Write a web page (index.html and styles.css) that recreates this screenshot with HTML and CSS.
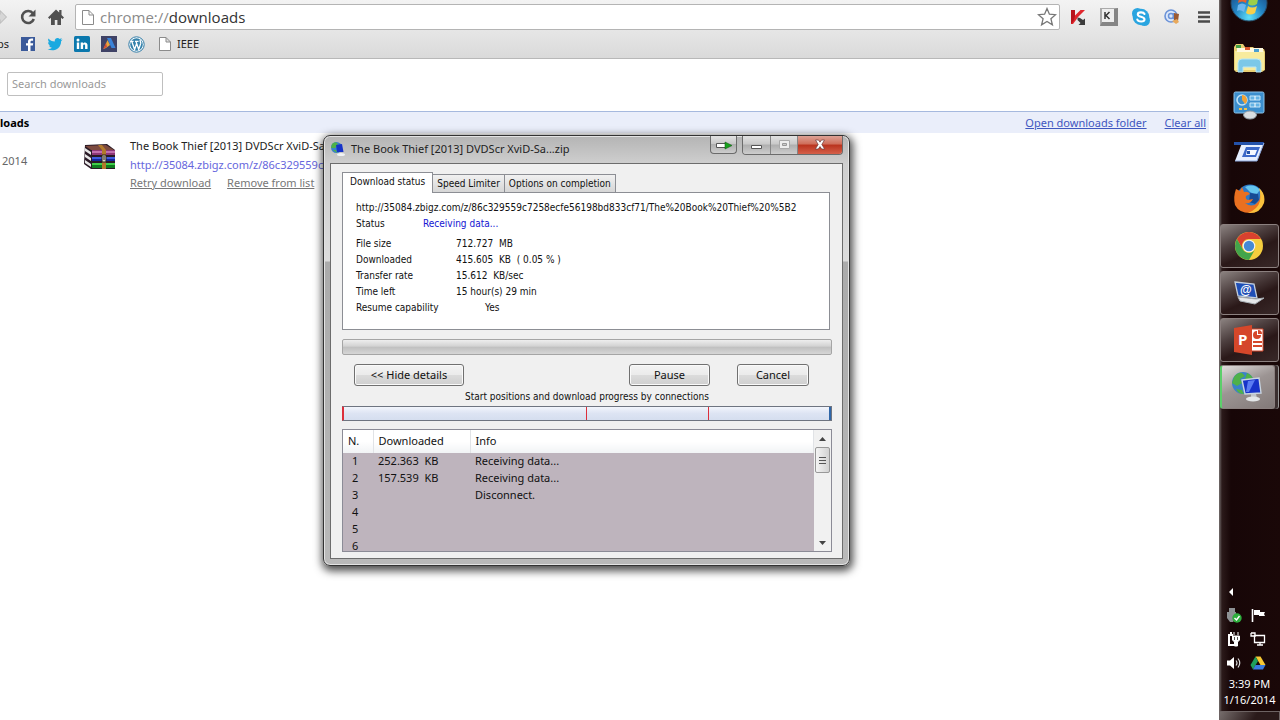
FILE: index.html
```html
<!DOCTYPE html>
<html lang="en">
<head>
<meta charset="utf-8">
<title>Downloads</title>
<link rel="stylesheet" href="styles.css">
</head>
<body>
<div class="desktop">
  <div class="browser">
    <header class="chrome">
      <div class="toolbar">
        <button class="tool forward" aria-label="Forward"><svg width="9" height="18" viewBox="0 0 9 18"><path d="M-6 6.500h6V2.500L6.500 9 0 15.500v-4h-6z" fill="#d6d6d6" stroke="#b5b5b5"/></svg></button>
        <button class="tool reload" aria-label="Reload"><svg width="18" height="18" viewBox="0 0 18 18"><path d="M14 5.500A6 6 0 1 0 14.800 11" fill="none" stroke="#505050" stroke-width="2.600"/><path d="M16.500 1.500v7h-7z" fill="#505050"/></svg></button>
        <button class="tool home" aria-label="Home"><svg width="18" height="18" viewBox="0 0 18 18"><path d="M9 1.500 1 9.500l1.500 1.500L4 9.700V17h3.800v-5h2.600v5H14V9.700l1.500 1.300L17 9.500l-2.500-2.500V2h-2.300v2.500z" fill="#505050"/></svg></button>
        <div class="omnibox">
          <svg class="page" width="12" height="15" viewBox="0 0 12 15"><path d="M.5.500h6.500l4.500 4.500v9.500H.500zM7 .5V5h4.500" fill="#fff" stroke="#8b8b8b"/></svg>
          <span class="address" role="textbox" aria-label="Address"><span class="scheme">chrome://</span>downloads</span>
          <button class="star" aria-label="Bookmark"><svg width="20" height="20" viewBox="0 0 20 20"><path d="M10 1.500l2.400 5.700 6.200.500-4.700 4 1.500 6.100L10 14.500l-5.400 3.300 1.500-6.100-4.700-4 6.200-.5z" fill="#fff" stroke="#777" stroke-width="1.300"/></svg></button>
        </div>
        <div class="extensions">
          <button class="tool" aria-label="Kaspersky advisor"><svg width="18" height="18" viewBox="0 0 18 18"><path d="M2 2h4v5.500L11.500 2H16L9 9l-2 3-3 4H2z" fill="#e0262c"/><path d="M2 2h4v6l-1 4-3 4z" fill="#b8141c"/><path d="M8.500 9.500l2.500.5 3 2 2-1.500V17h-6.500l2-2-3-3z" fill="#3c3c3c"/></svg></button>
          <button class="tool" aria-label="Virtual keyboard"><svg width="20" height="20" viewBox="0 0 20 20"><path d="M1 1h18v18H1z" fill="#aaa"/><path d="M3 2h12v13H3z" fill="#eee"/><path d="M15 2l4-1v18l-4-4zM1 19l2-4h12l4 4z" fill="#858585"/><path d="M6 5v7M10.500 5 7 8.500l3.500 3.500" fill="none" stroke="#333" stroke-width="1.500"/></svg></button>
          <button class="tool" aria-label="Skype"><svg width="20" height="20" viewBox="0 0 20 20"><circle cx="6.500" cy="6.500" r="5.500" fill="#2aa5e0"/><circle cx="13.500" cy="13.500" r="5.500" fill="#2aa5e0"/><circle cx="10" cy="10" r="8.300" fill="#2aa5e0"/><path d="M13.500 7C12.500 4.800 6.800 4.700 6.800 7.400c0 3 6.700 1.600 6.700 4.900 0 3-6.300 2.900-7.200.2" fill="none" stroke="#fff" stroke-width="2.100" stroke-linecap="round"/></svg></button>
          <button class="tool" aria-label="Mail checker"><svg width="18" height="18" viewBox="0 0 18 18"><circle cx="8" cy="8" r="6" fill="#dce8fa" stroke="#6b93d8" stroke-width="1.600"/><circle cx="8" cy="8" r="2.500" fill="none" stroke="#6b93d8" stroke-width="1.500"/><path d="M10.500 5v5.500h2.500" fill="none" stroke="#6b93d8" stroke-width="1.400"/><path d="M11 5l5 1-1 7-4-1z" fill="#9c5a32"/><path d="M9 13l5-2 2 3-3 2z" fill="#e8a95c"/></svg></button>
          <button class="tool menu" aria-label="Menu"><svg width="14" height="14" viewBox="0 0 14 14"><path d="M1 2.500h12M1 7h12M1 11.500h12" stroke="#4a4a4a" stroke-width="2.600"/></svg></button>
        </div>
      </div>
      <nav class="bookmarks">
        <a class="apps" href="#">ps</a>
        <a href="#" aria-label="Facebook"><svg width="16" height="16" viewBox="0 0 16 16"><path d="M1 1h14v14H1z" fill="#3b5a9a"/><path d="M10.500 15V9.500h2.300l.4-2.300h-2.700V6c0-.8.4-1.300 1.300-1.300h1.300V2.600C9.800 2.200 8 3.200 8 5.600v1.600H6v2.300h2V15z" fill="#fff"/></svg></a>
        <a href="#" aria-label="Twitter"><svg width="16" height="16" viewBox="0 0 16 16"><path d="M1.500 2.500C3 4.300 5 5.400 7.800 5.500 7.200 2.300 10.700.800 12.800 2.900l2-.8-1 1.800 1.800-.4-1.500 1.800C14.200 12.500 6.500 16.500.5 13c2 .1 3.400-.4 4.500-1.300-1.500-.1-2.500-.9-2.900-2.200h1.300C1.900 8.900 1 7.800 1 6.200l1.400.4C1.200 5.600.7 4.200 1.500 2.500z" fill="#1ba9e0"/></svg></a>
        <a href="#" aria-label="LinkedIn"><svg width="16" height="16" viewBox="0 0 16 16"><rect width="16" height="16" rx="1.500" fill="#0b78ad"/><circle cx="4" cy="4" r="1.500" fill="#fff"/><path d="M2.800 6.500h2.400V13H2.800zM6.700 6.500H9v1c1-1.700 4.500-1.600 4.500 1.600V13h-2.400V9.600c0-1.600-2-1.500-2 0V13H6.700z" fill="#fff"/></svg></a>
        <a href="#" aria-label="Analytics"><svg width="16" height="16" viewBox="0 0 16 16"><path d="M0 0h16v16H0z" fill="#3f4266"/><path d="M6 2h4l4.500 10h-4z" fill="#3b83d8"/><path d="M6.500 4 9 9l-4 3-2.500 1z" fill="#e8a33c"/><path d="M2 13l3-6 1 4z" fill="#cf4a3a"/></svg></a>
        <a href="#" aria-label="WordPress"><svg width="17" height="17" viewBox="0 0 17 17"><circle cx="8.500" cy="8.500" r="7.700" fill="#fff" stroke="#2f7aa5" stroke-width="1"/><circle cx="8.500" cy="8.500" r="6.300" fill="#3482ab"/><path d="M2.600 5.300h3M7 5.300h3.500M3.800 5.500l2.800 8 2.200-6.500M8 5.500l2.700 8 2-6c.4-1.500-1.200-2-.4-3.700" fill="none" stroke="#fff" stroke-width="1.300"/></svg></a>
        <a class="folder" href="#"><svg width="12" height="14" viewBox="0 0 12 14"><path d="M.5.500H7L11.500 5v8.500H.500zM7 .5V5h4.500" fill="#fff" stroke="#8b8b8b"/></svg>IEEE</a>
      </nav>
    </header>
    <main class="downloads">
      <input class="search" type="search" placeholder="Search downloads" aria-label="Search downloads">
      <div class="band">
        <h1>loads</h1>
        <a href="#">Open downloads folder</a>
        <a href="#">Clear all</a>
      </div>
      <div class="entry">
        <div class="date">2014</div>
        <svg class="archive" width="34" height="26" viewBox="0 0 34 26">
          <path d="M2 1l22-1 8 6v19H8L1 20z" fill="#2a1a26"/>
          <path d="M2 2l21-1 8 5H8z" fill="#7d4a3f"/><path d="M9 6h23v5H9z" fill="#8e3678"/><path d="M9 7h23v2H9z" fill="#c070ae"/>
          <path d="M9 13h23v4H9z" fill="#1424a0"/><path d="M9 13h23v2H9z" fill="#3f5ce0"/>
          <path d="M9 19h23v5H9z" fill="#0f7d20"/><path d="M9 19h23v2H9z" fill="#3fce49"/>
          <path d="M2 4l6 4v3L2 7zM2 10l6 4v3l-6-4zM2 16l6 4v3l-6-4z" fill="#e8e8e8"/>
          <path d="M15 1h4l4 5v19h-4V6z" fill="#b27a2c"/><path d="M19 11h4v7h-4z" fill="#dcd6c4" stroke="#28221c"/><path d="M21 12v4" stroke="#28221c"/>
        </svg>
        <div class="info">
          <div class="name">The Book Thief [2013] DVDScr XviD-Sa...zip</div>
          <a class="source" href="#">http://35084.zbigz.com/z/86c329559c7258ecfe56</a>
          <div class="actions"><a href="#">Retry download</a><a href="#">Remove from list</a></div>
        </div>
      </div>
    </main>
  </div>

  <aside class="taskbar">
    <button class="orb" aria-label="Start"><svg width="38" height="38" viewBox="0 0 38 38"><defs><radialGradient id="orb" cx=".5" cy=".9" r=".8"><stop offset="0" stop-color="#5fe0fa"/><stop offset=".5" stop-color="#2384c4"/><stop offset="1" stop-color="#1a4d87"/></radialGradient></defs><circle cx="19" cy="19" r="18" fill="url(#orb)" stroke="#274b66"/><path d="M10 10q4-3 8 0l-2 9q-4-3-8 0z" fill="#e8622c"/><path d="M20 11q4 3 9 0l-2 9q-5 3-9 0z" fill="#9cce4a"/><path d="M8 21q4-3 8 0l-2 7q-4-3-7-1z" fill="#6fb7ee"/><path d="M18 22q4 3 9 0l-2 7q-5 3-9 0z" fill="#f8cf4b"/></svg></button>
    <div class="tasks">
      <button class="task" aria-label="Explorer"><svg width="34" height="32" viewBox="0 0 34 32"><path d="M2 5 4 2h7l2 3h8l2 2h9l1 3v18l-3 2H4l-2-2z" fill="#e9cf73"/><path d="M3 9h29v19H3z" fill="#f8eb9d"/><path d="M5 6h26v4H5z" fill="#fff9df"/><path d="M4 3h5v3H4z" fill="#43a047"/><path d="M13 5h5v3h-5z" fill="#d8582e"/><path d="M22 7h5v3h-5z" fill="#4a9fd1"/><path d="M6 30v-9q0-4 4-4h15q4 0 4 4v9h-5v-5H11v5z" fill="#7cc8e8" stroke="#b8e6f6"/></svg></button>
      <button class="task" aria-label="Control panel"><svg width="34" height="30" viewBox="0 0 34 30"><rect x="2" y="2" width="30" height="21" rx="1.500" fill="#3c8fce" stroke="#8ec4ea"/><circle cx="10" cy="10" r="5" fill="none" stroke="#bfe2f8" stroke-width="1.600"/><path d="M10 10V5A5 5 0 0 1 13 14z" fill="#f0a236"/><path d="M18 6h10v4H18zM18 13h10v4H18z" fill="#64b2e4" stroke="#c6e5f7"/><path d="M23 6v4M23 13v4" stroke="#fff"/><path d="M7 19h3M12 19h3" stroke="#f5c34a" stroke-width="2"/><ellipse cx="18" cy="25" rx="6.500" ry="4" fill="#d9dee2" stroke="#909ba5"/></svg></button>
      <button class="task" aria-label="Run"><svg width="34" height="24" viewBox="0 0 34 24"><path d="M10 3h22l-7 18H3z" fill="#e7efff"/><path d="M2 2h30l-1 3H2z" fill="#2452aa"/><path d="M14 7h14l-4 10H10z" fill="#3c68c8"/><path d="M15 10h10l-2 5h-9z" fill="#f6f9ff"/><path d="M15 11h3v3h-3z" fill="#2452aa"/><path d="M3 21h22l7-18" fill="none" stroke="#8daae0"/></svg></button>
      <button class="task" aria-label="Firefox"><svg width="32" height="32" viewBox="0 0 32 32"><circle cx="17" cy="15" r="13.500" fill="#2e79c6"/><path d="M12 4q9-4 15 3l-4 5-6-3z" fill="#65c5ee"/><path d="M17 10l8 1 1 6-4 4-6-2z" fill="#164a94"/><path d="M3 6l4 2 2-4 2 5q4-1 6 2l-4 2q-1 3 2 4l5-1q-2 5-8 4 7 5 12 0 4-4 3-9 4 5 2 10-3 9-12 9Q6 30 2 22 0 14 3 6z" fill="#ea7020"/><path d="M26 5q7 6 5 15-4 11-16 10 10-4 12-12 1-7-1-13z" fill="#f9c13d"/></svg></button>
      <button class="task open" aria-label="Chrome"><svg width="30" height="30" viewBox="0 0 30 30"><circle cx="15" cy="15" r="14" fill="#f5cd3e"/><path d="M2.900 8A14 14 0 0 1 27.100 8H15a7 7 0 0 0-6.100 10.500z" fill="#d9412f"/><path d="M2.900 8A14 14 0 0 0 15 29l6-10.500a7 7 0 0 1-12.100 0z" fill="#43a44b"/><circle cx="15" cy="15" r="6.300" fill="#f4f4f4"/><circle cx="15" cy="15" r="5.200" fill="#4689d4"/></svg></button>
      <button class="task open" aria-label="Internet connection"><svg width="34" height="28" viewBox="0 0 34 28"><path d="M3 3l19 2 3 14-19-2z" fill="#1f4fb6" stroke="#c5cfdc" stroke-width="1.300"/><text x="8" y="15" class="at">@</text><path d="M6 18l18 2 8-1-9 6-15-3z" fill="#e6e8ea" stroke="#a8afb5"/></svg></button>
      <button class="task open" aria-label="PowerPoint"><svg width="32" height="32" viewBox="0 0 32 32"><path d="M16 5h14v22H16z" fill="#fff" stroke="#d5472a"/><path d="M20 18h9M20 22h9" stroke="#d5472a" stroke-width="2"/><path d="M24 7a4 4 0 1 0 4 4h-4z" fill="#d5472a"/><path d="M25 6v4h4a4 4 0 0 0-4-4z" fill="#d5472a"/><path d="M1 4l18-3v30L1 28z" fill="#d5472a"/><text x="5" y="21" class="ppt">P</text></svg></button>
      <button class="task open active" aria-label="Download manager"><svg width="34" height="32" viewBox="0 0 34 32"><circle cx="13" cy="12" r="11" fill="#3a82c8"/><path d="M4 6q4-5 8-4l3 3-5 3 2 4-5 3-5-3zM17 2q5 2 6 6l-5 3-3-3zM6 18l6 1 2 4q-6 0-8-5z" fill="#4fb148"/><path d="M12 9l17-2 2 15-16 1z" fill="#1733c9" stroke="#c9d5e0" stroke-width="1.400"/><path d="M18 10l7-1-6 12h-3z" fill="#5b7cf2"/><path d="M21 23h5l1 4h-6z" fill="#c2c7cc"/><ellipse cx="23" cy="28" rx="7" ry="2.500" fill="#e3e6e8"/></svg></button>
    </div>
    <div class="tray">
      <button class="expand" aria-label="Show hidden icons"><svg width="6" height="8" viewBox="0 0 6 8"><path d="M5 0v8L1 4z" fill="#fff"/></svg></button>
      <div class="status">
        <svg width="16" height="16" viewBox="0 0 16 16"><path d="M3 1h6v4H3zM1 5h9v6l-3 4H4l-3-4z" fill="#8d9194"/><circle cx="11" cy="11" r="4.700" fill="#2eae3d"/><path d="M8.500 11l2 2 3-4" fill="none" stroke="#fff" stroke-width="1.400"/></svg>
        <svg width="16" height="16" viewBox="0 0 16 16"><path d="M2.500 2v13" stroke="#fff" stroke-width="1.600"/><path d="M4 3h6v2h5l-1 2 1 2H9V8H4z" fill="#fff"/></svg>
        <svg width="16" height="16" viewBox="0 0 16 16"><path d="M2 3h5v2H4v8h5v2H2zM4 1h2v2H4z" fill="#fff"/><path d="M8 1v3M12 1v3M6.500 5h7v4l-2 2v4h-3v-4l-2-2z" fill="#fff" stroke="#fff"/><path d="M8.500 6v3M11.500 6v3" stroke="#555"/></svg>
        <svg width="16" height="16" viewBox="0 0 16 16"><path d="M4.500 4.500h10v7h-10zM7 14h6M10 11v3M1 2h4v4M1 2v3h3" fill="none" stroke="#fff" stroke-width="1.300"/></svg>
        <svg width="16" height="16" viewBox="0 0 16 16"><path d="M1 5.500h3L8 2v12l-4-3.500H1z" fill="#fff"/><path d="M10 5.500q2 2.500 0 5M12 3.500q3.500 4.500 0 9" fill="none" stroke="#ddd" stroke-width="1.200"/></svg>
        <svg width="16" height="16" viewBox="0 0 16 16"><path d="M5.500 1.500h5l5 8.500h-5z" fill="#f7c934"/><path d="M5.500 1.500 8 6 3 14.500.500 10z" fill="#1f9f5b"/><path d="M3 14.500 5.500 10h10L13 14.500z" fill="#3a7be0"/></svg>
      </div>
      <time class="clock">3:39 PM<br>1/16/2014</time>
      <button class="peek" aria-label="Show desktop"></button>
    </div>
  </aside>

  <section class="window" role="dialog" aria-labelledby="window-title">
    <header class="titlebar">
      <svg width="16" height="16" viewBox="0 0 16 16"><circle cx="6.500" cy="6.500" r="5.500" fill="#3a82c8"/><path d="M2 3q3-3 5-1l1 2-3 3-4 0zM3 9l3 0 1 3z" fill="#4fb148"/><path d="M6 4l6-1 1.500 8H7z" fill="#1733c9"/><ellipse cx="11" cy="13.500" rx="4" ry="1.600" fill="#f0f2f4"/></svg>
      <h2 id="window-title">The Book Thief [2013] DVDScr XviD-Sa...zip</h2>
      <div class="caption">
        <button class="cap tray-cap" aria-label="Minimize to tray"><svg width="18" height="12" viewBox="0 0 18 12"><path d="M1.500 4.500h9v4h-9z" fill="#fff" stroke="#555"/><path d="M10 3l7 3.500-7 3.500z" fill="#17a31d" stroke="#155d18" stroke-width=".6"/></svg></button>
        <div class="cap-group">
          <button class="cap" aria-label="Minimize"><svg width="13" height="12" viewBox="0 0 13 12"><path d="M1.500 6.500h10v3h-10z" fill="#fff" stroke="#555"/></svg></button>
          <button class="cap" aria-label="Maximize" disabled><svg width="13" height="12" viewBox="0 0 13 12"><path d="M1.500 1.500h10v8h-10z" fill="#eee" stroke="#aaa"/><path d="M4.500 4.500h4v2h-4z" fill="#ccc" stroke="#999"/></svg></button>
          <button class="cap close" aria-label="Close"><svg width="12" height="12" viewBox="0 0 12 12"><path d="M1.500 1h3L6 3.200 7.500 1h3L7.800 5.500l2.900 4.500h-3L6 7.600 4.300 10h-3l2.900-4.500z" fill="#fff" stroke="#6b3a3a" stroke-width=".7"/></svg></button>
        </div>
      </div>
    </header>
    <div class="client">
      <div class="tabs" role="tablist">
        <button class="tab selected" role="tab" aria-selected="true">Download status</button>
        <button class="tab" role="tab" aria-selected="false">Speed Limiter</button>
        <button class="tab" role="tab" aria-selected="false">Options on completion</button>
      </div>
      <div class="panel" role="tabpanel">
        <div class="url">http://35084.zbigz.com/z/86c329559c7258ecfe56198bd833cf71/The%20Book%20Thief%20%5B2</div>
        <dl class="state"><dt>Status</dt><dd>Receiving data...</dd></dl>
        <dl class="facts">
          <dt>File size</dt><dd>712.727&nbsp; MB</dd>
          <dt>Downloaded</dt><dd>415.605&nbsp; KB&nbsp; ( 0.05 % )</dd>
          <dt>Transfer rate</dt><dd>15.612&nbsp; KB/sec</dd>
          <dt>Time left</dt><dd>15 hour(s) 29 min</dd>
          <dt>Resume capability</dt><dd class="resume">Yes</dd>
        </dl>
      </div>
      <div class="progress" role="progressbar" aria-label="Download progress" aria-valuenow="0"></div>
      <div class="buttons">
        <button class="push details">&lt;&lt; Hide details</button>
        <button class="push pause">Pause</button>
        <button class="push cancel">Cancel</button>
      </div>
      <div class="caption-text">Start positions and download progress by connections</div>
      <div class="segments"><i></i><i></i><i></i><i></i></div>
      <div class="list">
        <table class="connections">
          <thead><tr><th class="col-n">N.</th><th class="col-size">Downloaded</th><th>Info</th></tr></thead>
          <tbody>
            <tr><td>1</td><td>252.363&nbsp; KB</td><td>Receiving data...</td></tr>
            <tr><td>2</td><td>157.539&nbsp; KB</td><td>Receiving data...</td></tr>
            <tr><td>3</td><td></td><td>Disconnect.</td></tr>
            <tr><td>4</td><td></td><td></td></tr>
            <tr><td>5</td><td></td><td></td></tr>
            <tr><td>6</td><td></td><td></td></tr>
          </tbody>
        </table>
        <div class="scroll">
          <button aria-label="Scroll up"><svg width="7" height="4" viewBox="0 0 7 4"><path d="M0 4 3.500 0 7 4z" fill="#444"/></svg></button>
          <div class="thumb"><svg width="7" height="9" viewBox="0 0 7 9"><path d="M0 1.500h7M0 4.500h7M0 7.500h7" stroke="#555"/></svg></div>
          <button class="down" aria-label="Scroll down"><svg width="7" height="4" viewBox="0 0 7 4"><path d="M0 0 3.500 4 7 0z" fill="#444"/></svg></button>
        </div>
      </div>
    </div>
  </section>
</div>
</body>
</html>
```

FILE: styles.css
```css
* { box-sizing: border-box; }
body { margin: 0; font: 11px/16px "Noto Sans", sans-serif; color: #222; background: #fff; }
button { padding: 0; border: 0; background: none; font: inherit; color: inherit; }
svg { display: block; flex: none; }
h1, h2, dl, dd { margin: 0; }

.desktop { position: relative; display: flex; min-height: 100vh; overflow: hidden; }
.browser { flex: 1; min-width: 0; }

/* Browser toolbar */
.chrome { height: 59px; padding-top: 4px; background: linear-gradient(#f3f3f3, #dadada); border-bottom: 1px solid #b8b8b8; }
.toolbar { display: flex; align-items: center; height: 26px; }
.tool { display: flex; align-items: center; justify-content: center; }
.forward { width: 9px; margin-right: 10px; }
.home { margin: 0 10px; }
.omnibox { flex: 1; display: flex; align-items: center; height: 26px; padding: 0 2px 0 6px; background: #fff; border: 1px solid #b4b4b4; border-radius: 2px; }
.address { flex: 1; margin-left: 6px; font: 15px/20px "Open Sans", sans-serif; color: #333; }
.scheme { color: #8a8a8a; }
.extensions { display: flex; align-items: center; gap: 12px; padding: 0 8px 0 9px; }
.menu { width: 14px; margin-left: 4px; }
.bookmarks { display: flex; align-items: center; gap: 11px; height: 28px; }
.bookmarks a { color: #222; text-decoration: none; }
.apps { display: flex; justify-content: flex-end; width: 9px; overflow: hidden; }
.folder { display: flex; align-items: center; gap: 6px; margin-left: 3px; }

/* Downloads page */
.downloads { padding: 13px 10px 0 0; }
.search { display: block; width: 156px; height: 24px; margin: 0 0 15px 7px; padding: 0 4px 2px; border: 1px solid #bfbfbf; border-radius: 2px; font: 11px/16px "Noto Sans", sans-serif; }
.search::placeholder { color: #999; }
.band { display: flex; gap: 18px; height: 22px; padding-right: 3px; line-height: 22px; background: #eaeefa; border-top: 1px solid #a6b9de; }
.band h1 { flex: 1; font-size: 11px; line-height: 22px; color: #000; }
.band a { color: #3f57c0; }
.entry { display: flex; padding-top: 4px; line-height: 18px; }
.date { width: 26px; padding: 15px 0 0 2px; color: #666; }
.archive { margin: 7px 13px 0 57px; }
.info { min-width: 0; white-space: nowrap; }
.source { display: block; color: #6666dd; text-decoration: none; line-height: 19px; }
.name { color: #222; }
.actions { display: flex; gap: 16px; }
.actions a { color: #777; }

/* Taskbar */
.taskbar { display: flex; flex-direction: column; width: 61px; color: #fff; background: linear-gradient(90deg, #76706f, #2b1a1a 3px, #170607 12px, #1a0808); }
.orb { display: flex; align-items: flex-end; justify-content: center; height: 22px; padding-right: 2px; overflow: hidden; }
.tasks { display: flex; flex-direction: column; gap: 3px; padding: 14px 1px 0; }
.task { display: flex; align-items: center; justify-content: center; height: 44px; padding-right: 2px; border: 1px solid transparent; border-radius: 3px; }
.open { border-color: #8b807f; background: linear-gradient(155deg, #8b8280, #4d3f3f 35%, #2a1818 60%, #382828); }
.active { margin-right: 4px; border-left: 2px solid #5ccf6b; background: linear-gradient(155deg, #e0dddc, #9c9493 45%, #827978); box-shadow: 3px 0 0 #3b2f2f, 4px 0 0 #999; }
.at { font: bold 12px "Liberation Sans", sans-serif; fill: #fff; }
.ppt { font: bold 15px "Open Sans", sans-serif; fill: #fff; }
.tray { display: flex; flex-direction: column; margin-top: auto; }
.expand { align-self: flex-start; margin: 0 0 11px 9px; }
.status { display: grid; grid-template-columns: 16px 16px; gap: 8px; justify-content: center; padding-right: 8px; }
.clock { margin: 5px 0 3px; text-align: center; }
.peek { height: 9px; border: 1px solid #6d6363; border-bottom: 0; background: linear-gradient(120deg, #756c6b, #2a1a1a 60%); }

/* Download window */
.window { position: absolute; left: 323px; top: 135px; width: 527px; padding: 0 6px 6px; border: 1px solid #333; border-radius: 7px; background: linear-gradient(#b4b4b4, #cfcfcf 28px, #dcdcdc 125px, #ababab 126px, #b9b9b9); box-shadow: inset 0 0 0 1px #e3e3e3, 1px 3px 9px 2px rgba(0, 0, 0, .7); font: 10px/16px "DejaVu Sans Condensed", "Liberation Sans", sans-serif; color: #111; }
.titlebar { display: flex; align-items: center; height: 27px; padding-bottom: 2px; }
.titlebar h2 { flex: 1; margin-left: 5px; font: 11px/16px "Noto Sans", sans-serif; color: #222; white-space: nowrap; }
.caption { display: flex; align-self: flex-start; gap: 5px; }
.cap { display: flex; align-items: center; justify-content: center; width: 27px; height: 18px; background: linear-gradient(#e2e2e2, #c9c9c9 45%, #aeaeae 50%, #cdcdcd); }
.tray-cap, .cap-group { border: 1px solid #6b6b6b; border-top: 0; border-radius: 0 0 4px 4px; overflow: hidden; }
.cap-group { display: flex; }
.cap + .cap { border-left: 1px solid #858585; }
.close { width: 45px; background: linear-gradient(#dda295, #cf6c58 45%, #b9321d 50%, #d5604a); }
.client { display: flex; flex-direction: column; padding: 8px 10px 6px 11px; background: #f0f0f0; border: 1px solid #6c6c6c; }
.tabs { display: flex; align-items: flex-end; height: 20px; }
.tab { height: 18px; margin-right: -1px; padding: 0 4px; border: 1px solid #8c8e94; border-bottom: 0; background: linear-gradient(#f1f1f1, #d6d6d6); white-space: nowrap; }
.selected { z-index: 1; height: 21px; margin-bottom: -1px; padding: 0 7px 2px; background: #fff; }
.panel { margin-right: 2px; padding: 7px 10px 13px 13px; background: #fff; border: 1px solid #8c8e94; }
.url { overflow: hidden; white-space: nowrap; }
.state { display: grid; grid-template-columns: 67px 1fr; margin-bottom: 4px; }
.state dd { color: #1414d2; }
.facts { display: grid; grid-template-columns: 100px 1fr; white-space: nowrap; }
.resume { padding-left: 29px; }
.progress { height: 16px; margin: 9px 0; border: 1px solid #a5a5a5; border-radius: 2px; background: linear-gradient(#eee, #d2d2d2 45%, #bfbfbf 50%, #d6d6d6); }
.buttons { display: flex; padding: 0 23px 0 12px; font: 11px/16px "Noto Sans", sans-serif; }
.push { height: 22px; border: 1px solid #707070; border-radius: 3px; background: linear-gradient(#f3f3f3, #ebebeb 50%, #dcdcdc 50%, #cfcfcf); box-shadow: inset 0 0 0 1px #fafafa; }
.details { width: 110px; }
.pause { width: 81px; margin-left: auto; }
.cancel { width: 72px; margin-left: 27px; }
.caption-text { margin: 3px 0 1px; text-align: center; }
.segments { display: grid; grid-template-columns: 243px 122px 1fr 2px; height: 15px; border: 1px solid #6e7480; border-left-color: #dc2f3c; background: linear-gradient(#f2f5fc, #dde4f3 50%, #d5deef); }
.segments i { border-left: 1px solid #dc2f3c; }
.segments i:last-child { border-left: 2px solid #2f66a8; }
.list { display: flex; height: 123px; margin-top: 8px; border: 1px solid #8b8b96; background: #beb4bd; font: 11px/16px "Noto Sans", sans-serif; overflow: hidden; }
.connections { flex: 1; table-layout: fixed; border-collapse: collapse; align-self: flex-start; }
.connections th { height: 23px; padding: 0 0 2px 5px; text-align: left; font-weight: normal; background: linear-gradient(#fff 50%, #f1f3f5); border-right: 1px solid #e1e3e6; }
.connections td { height: 17px; padding: 0 0 1px 5px; white-space: nowrap; }
.connections td:first-child { padding-left: 9px; }
.connections .col-n { width: 30px; }
.connections .col-size { width: 97px; }
.scroll { display: flex; flex-direction: column; width: 17px; background: #f1f1f1; }
.scroll button { display: flex; align-items: center; justify-content: center; height: 17px; }
.scroll .down { margin-top: auto; }
.thumb { display: flex; align-items: center; justify-content: center; height: 26px; margin: 0 1px; border: 1px solid #999; border-radius: 2px; background: linear-gradient(90deg, #f4f4f4, #d2d2d2); }
```
